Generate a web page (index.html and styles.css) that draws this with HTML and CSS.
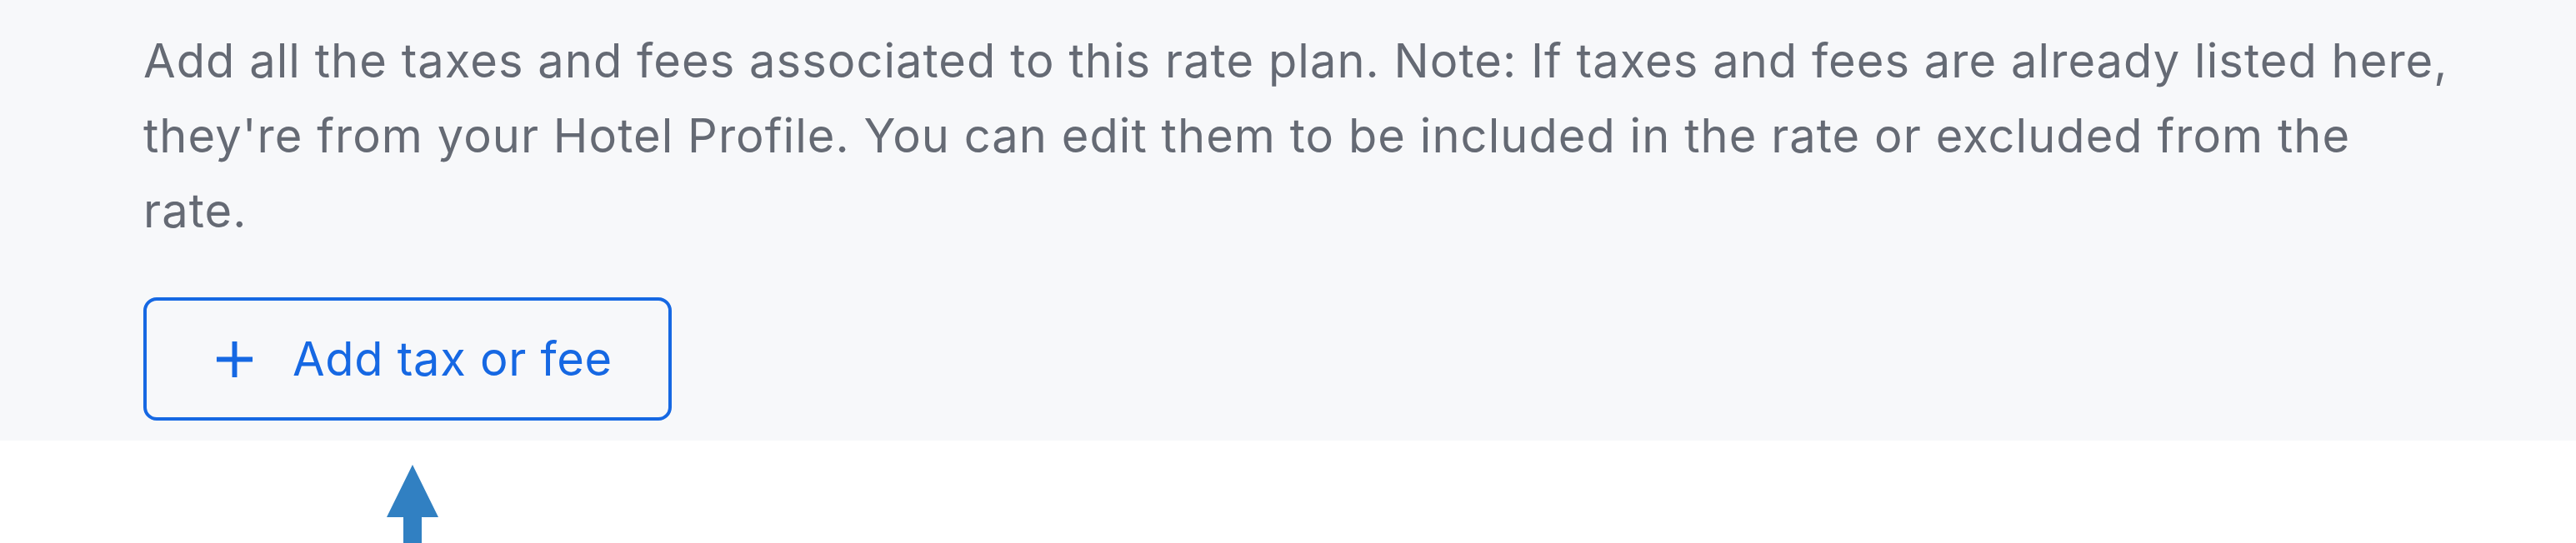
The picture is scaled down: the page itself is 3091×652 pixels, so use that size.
FILE: index.html
```html
<!DOCTYPE html>
<html lang="en">
<head>
<meta charset="utf-8">
<title>Taxes and fees</title>
<link rel="stylesheet" href="styles.css">
</head>
<body>
<section class="panel">
  <p class="note">Add all the taxes and fees associated to this rate plan. Note: If taxes and fees are already listed here, they're from your Hotel Profile. You can edit them to be included in the rate or excluded from the rate.</p>
  <button class="add-btn" type="button">
    <svg class="plus" viewBox="0 0 48 48" aria-hidden="true"><path d="M24 2v44M2 24h44" /></svg>
    <span>Add tax or fee</span>
  </button>
</section>
<div class="pointer">
  <svg viewBox="0 0 64 94" aria-hidden="true"><path d="M32 0L63 63H43V94H21V63H1Z" /></svg>
</div>
</body>
</html>
```
FILE: styles.css
```css
html, body {
  margin: 0;
  padding: 0;
  background: #ffffff;
}
body {
  font-family: Inter, "Noto Sans", sans-serif;
  width: 3091px;
  height: 652px;
  overflow: hidden;
}
.panel {
  background: #f7f8fa;
  padding: 28px 0 24px 172px;
  height: 477px;
}
.note {
  margin: 0;
  width: 2770px;
  font-size: 56px;
  line-height: 90px;
  letter-spacing: 1.05px;
  color: #656a74;
}
.add-btn {
  margin-top: 59px;
  display: flex;
  align-items: center;
  gap: 46px;
  width: 634px;
  height: 148px;
  box-sizing: border-box;
  padding: 0 0 0 82px;
  border: 4px solid #1668e3;
  border-radius: 16px;
  background: transparent;
  font-family: inherit;
  font-size: 56px;
  letter-spacing: 0.7px;
  color: #1668e3;
}
.plus {
  width: 47px;
  height: 47px;
  stroke: #1668e3;
  stroke-width: 6;
  fill: none;
}
.pointer {
  padding: 29px 0 0 463px;
}
.pointer svg {
  display: block;
  width: 64px;
  height: 94px;
  fill: #3180c2;
}
```
